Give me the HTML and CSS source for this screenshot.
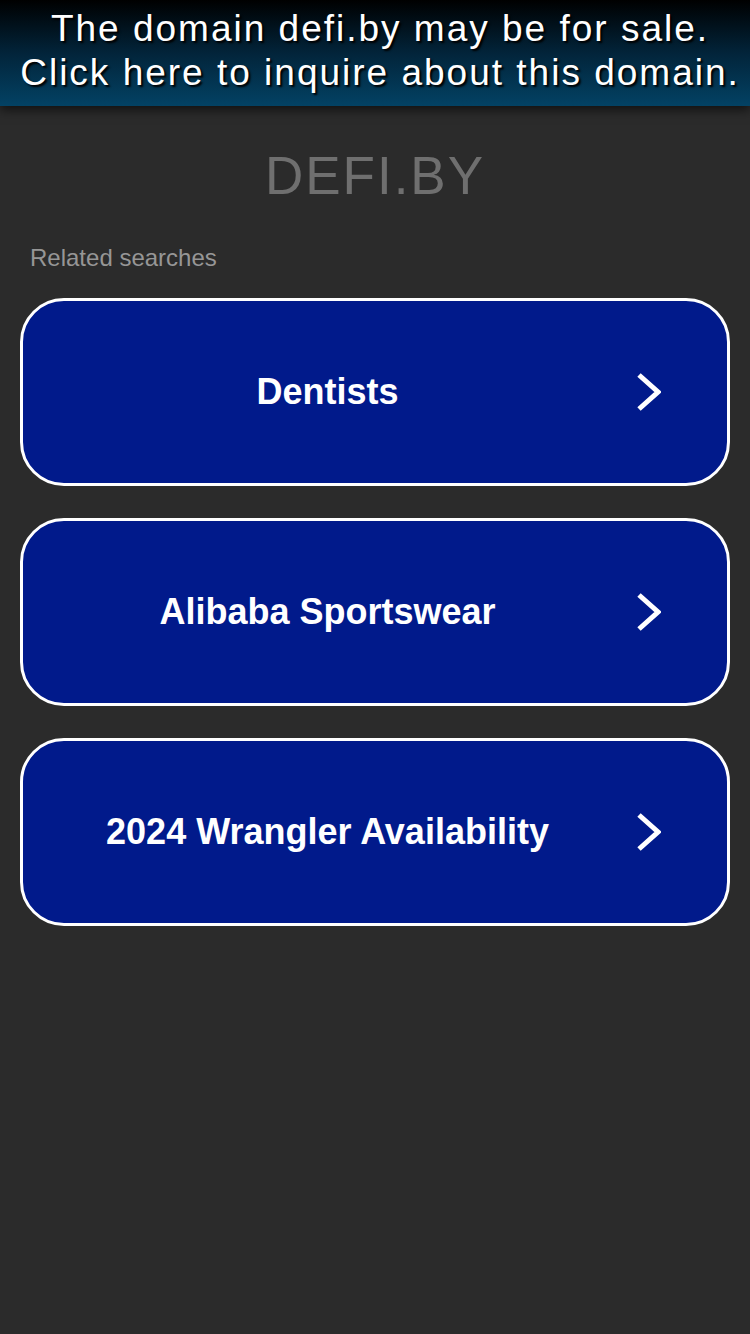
FILE: index.html
```html
<!DOCTYPE html>
<html lang="en">
<head>
  <meta charset="UTF-8">
  <meta name="viewport" content="width=device-width, initial-scale=1.0">
  <title>defi.by</title>
  <link rel="stylesheet" href="styles.css">
</head>
<body>
  <a class="sale-banner" href="#">
    The domain defi.by may be for sale.<br>
    Click here to inquire about this domain.
  </a>

  <h1 class="domain">DEFI.BY</h1>

  <div class="related">
    <p class="related-title">Related searches</p>

    <a class="search-card" href="#">
      <span class="search-text">Dentists</span>
      <svg class="chevron" width="24" height="40" viewBox="0 0 24 40">
        <polyline points="2,3 21,20 2,37" />
      </svg>
    </a>
    <a class="search-card" href="#">
      <span class="search-text">Alibaba Sportswear</span>
      <svg class="chevron" width="24" height="40" viewBox="0 0 24 40">
        <polyline points="2,3 21,20 2,37" />
      </svg>
    </a>
    <a class="search-card" href="#">
      <span class="search-text">2024 Wrangler Availability</span>
      <svg class="chevron" width="24" height="40" viewBox="0 0 24 40">
        <polyline points="2,3 21,20 2,37" />
      </svg>
    </a>
  </div>
</body>
</html>
```

FILE: styles.css
```css
body {
  margin: 0;
  background-color: #2b2b2b;
  font-family: "Liberation Sans", Arial, sans-serif;
  min-height: 1334px;
}

.sale-banner {
  display: block;
  box-sizing: border-box;
  height: 106px;
  padding: 7px 0 0 10px;
  background: linear-gradient(to bottom, #000000 0%, #02243a 50%, #034264 100%);
  box-shadow: 0 4px 10px rgba(0, 0, 0, 0.6);
  color: white;
  text-decoration: none;
  text-align: center;
  font-size: 37px;
  line-height: 44px;
  letter-spacing: 2px;
  text-shadow: 2px 2px 2px #000;
}

.domain {
  margin: 40px 0 0;
  text-align: center;
  color: #6f6f6f;
  font-weight: normal;
  font-size: 53px;
  line-height: 60px;
  letter-spacing: 2px;
}

.related {
  padding: 0 20px;
}

.related-title {
  margin: 38px 0 26px 10px;
  color: #969696;
  font-size: 24px;
  line-height: 28px;
}

.search-card {
  display: flex;
  align-items: center;
  box-sizing: border-box;
  height: 188px;
  margin-bottom: 32px;
  background-color: #011a8b;
  border: 3px solid white;
  border-radius: 44px;
  color: white;
  text-decoration: none;
}

.search-text {
  flex: 1;
  text-align: center;
  font-weight: bold;
  font-size: 36px;
}

.chevron {
  margin: 0 66px 0 5px;
}

.chevron polyline {
  fill: none;
  stroke: white;
  stroke-width: 5;
}
```
